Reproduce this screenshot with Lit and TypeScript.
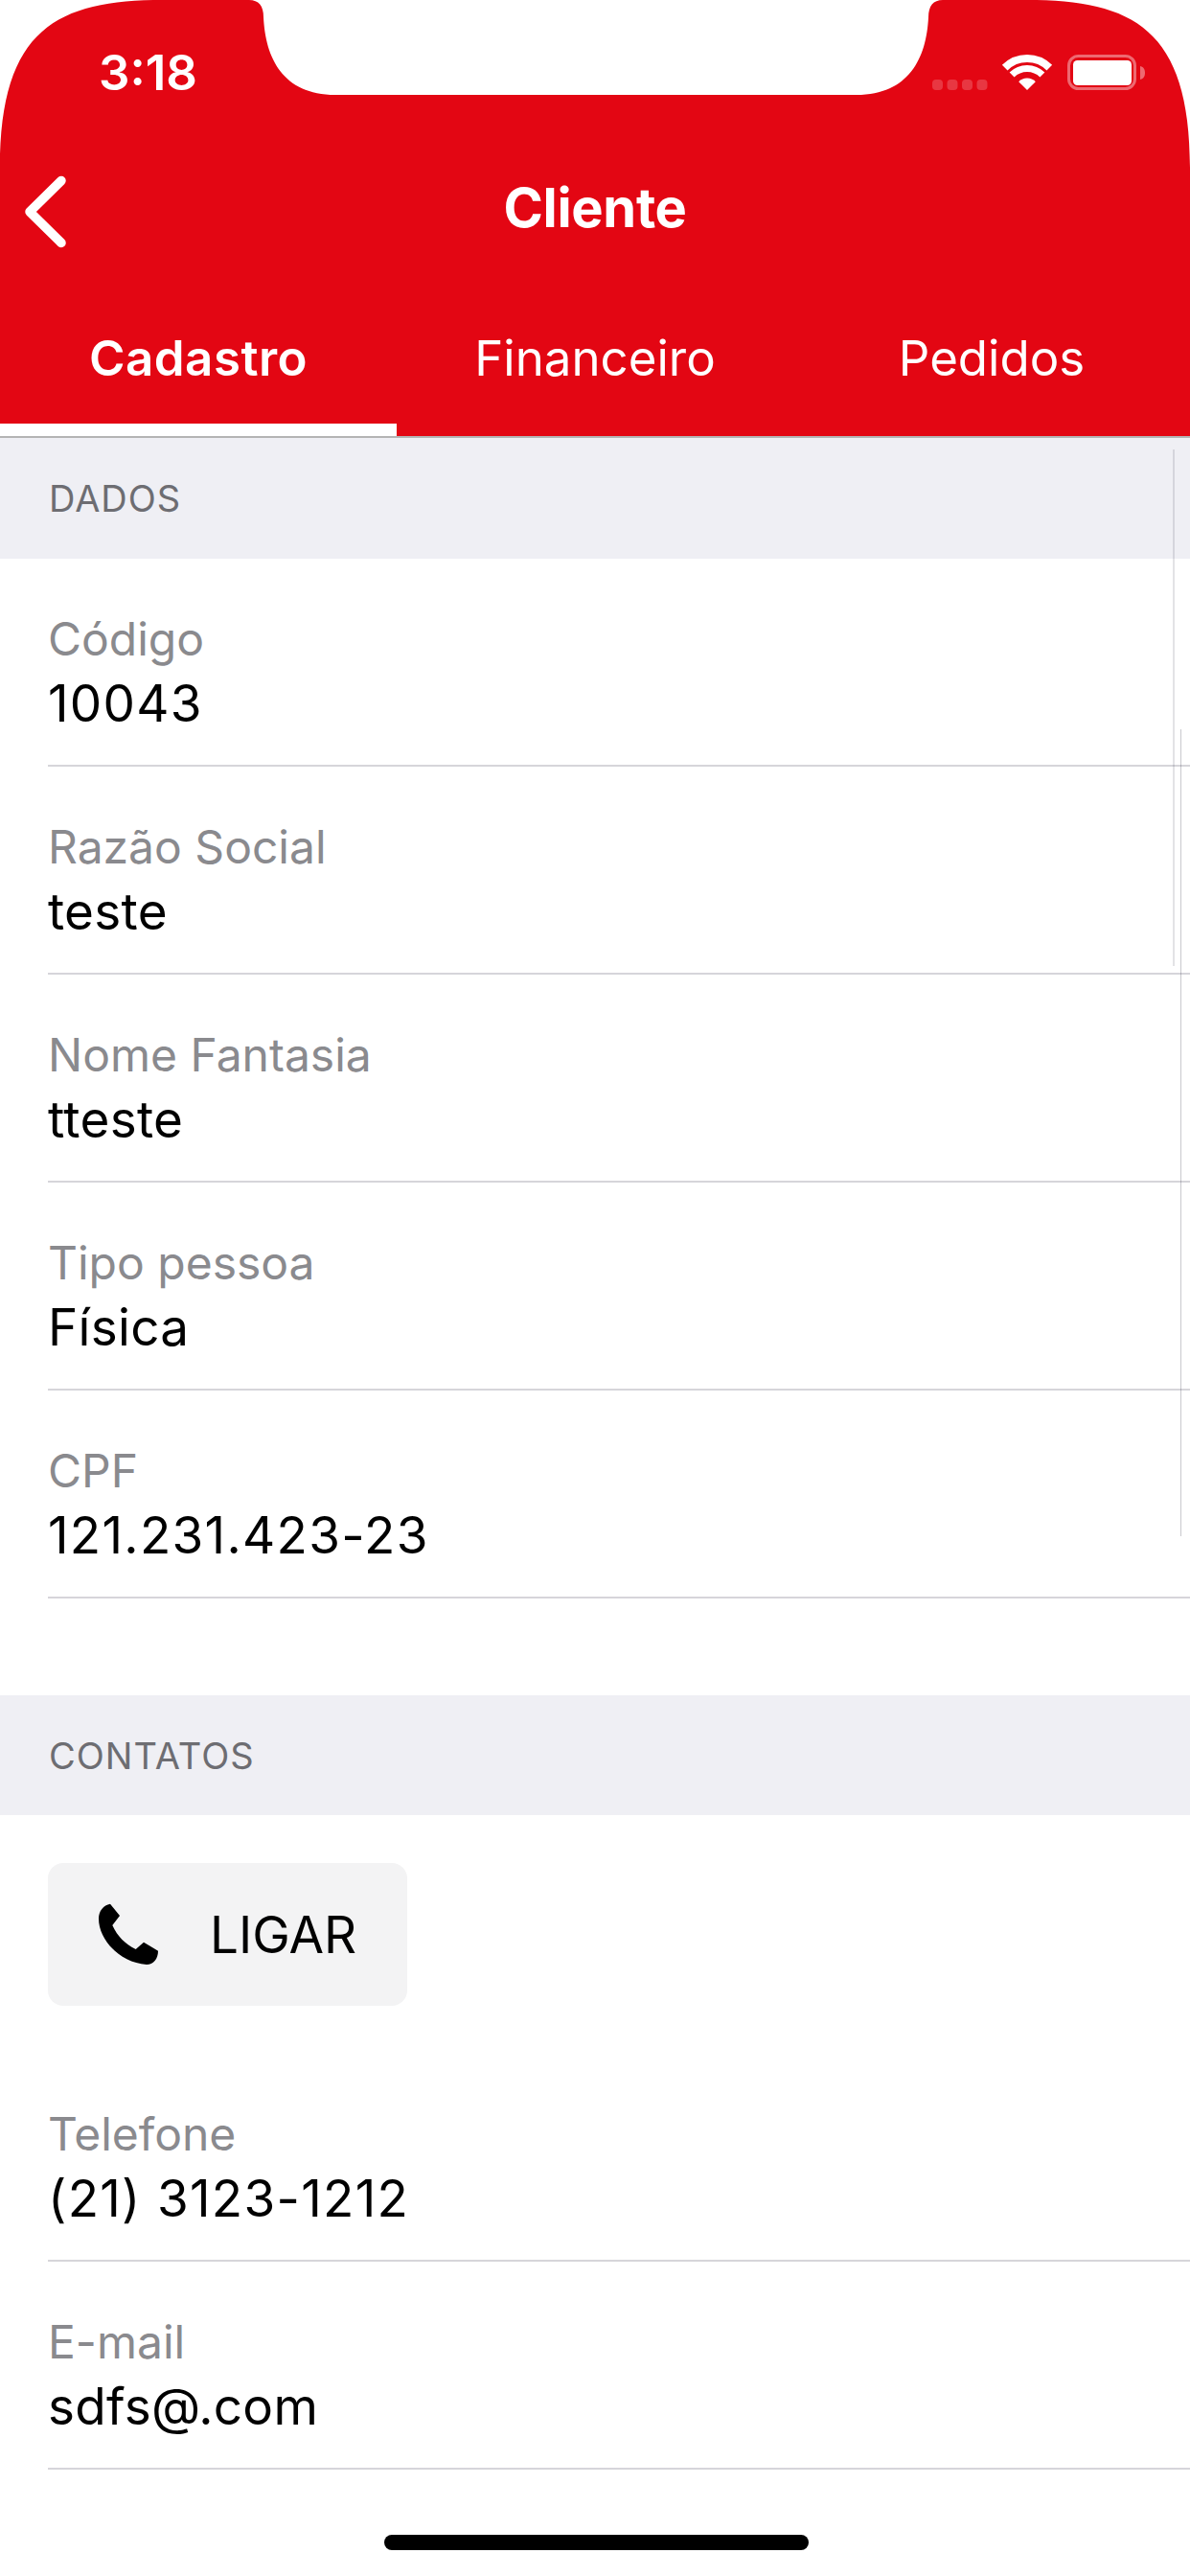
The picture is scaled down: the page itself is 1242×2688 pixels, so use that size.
import { LitElement, html, css } from 'lit'
import { customElement } from 'lit/decorators.js'
import { classMap } from 'lit/directives/class-map.js'

type Row = { label: string; value: string; num?: boolean }

const dados: Row[] = [
  { label: 'Código', value: '10043', num: true },
  { label: 'Razão Social', value: 'teste' },
  { label: 'Nome Fantasia', value: 'tteste' },
  { label: 'Tipo pessoa', value: 'Física' },
  { label: 'CPF', value: '121.231.423-23', num: true },
]

const contatos: Row[] = [
  { label: 'Telefone', value: '(21) 3123-1212', num: true },
  { label: 'E-mail', value: 'sdfs@.com' },
]

@customElement('app-root')
export class AppRoot extends LitElement {
  static styles = css`
    :host {
      display: block;
      position: relative;
      width: 1242px;
      height: 2688px;
      overflow: hidden;
      background: #fff;
      font-family: Inter, 'Liberation Sans', sans-serif;
      color: #000;
    }

    .header {
      background: #e30613;
      color: #fff;
      height: 455px;
      display: flex;
      flex-direction: column;
      border-bottom: 2px solid #b4b4b4;
      box-sizing: content-box;
    }

    .status {
      height: 150px;
      flex: none;
    }

    .nav {
      height: 134px;
      flex: none;
      display: flex;
      align-items: center;
      justify-content: center;
      position: relative;
    }

    .back {
      position: absolute;
      left: 26px;
      top: 33px;
    }

    .title {
      font-size: 56px;
      font-weight: 700;
      letter-spacing: -0.3px;
    }

    .tabs {
      flex: 1;
      display: grid;
      grid-template-columns: repeat(3, 1fr);
    }

    .tab {
      display: flex;
      align-items: flex-end;
      justify-content: center;
      font-size: 51px;
      line-height: 60px;
      font-weight: 400;
      padding-bottom: 38px;
      border-bottom: 13px solid transparent;
    }

    .tab.active {
      font-weight: 600;
      letter-spacing: 0.5px;
      border-bottom-color: #fff;
    }

    .section-head {
      height: 125px;
      background: #efeff4;
      display: flex;
      align-items: center;
      padding-left: 51px;
      font-size: 38px;
      letter-spacing: 1px;
      color: #6d6d72;
    }

    .section-head.first {
      height: 126px;
    }

    .row {
      height: 217px;
      box-sizing: border-box;
      margin-left: 50px;
      padding-top: 52px;
      border-bottom: 2px solid #d6d5da;
    }

    .label {
      font-size: 48px;
      line-height: 64px;
      color: #8a8a8e;
    }

    .value {
      font-size: 53px;
      line-height: 70px;
      letter-spacing: 0.3px;
    }

    .value.num {
      letter-spacing: 1.3px;
    }

    .spacer {
      height: 101px;
    }

    .call {
      margin: 50px 0 50px 50px;
      width: 375px;
      height: 149px;
      border-radius: 16px;
      background: #f3f3f4;
      display: flex;
      align-items: center;
      gap: 53px;
      padding-left: 53px;
      box-sizing: border-box;
      font-size: 53px;
    }

    .chrome {
      position: absolute;
      left: 0;
      top: 0;
    }

    .time {
      position: absolute;
      left: 103px;
      top: 46px;
      font-size: 51px;
      line-height: 60px;
      font-weight: 600;
      color: #fff;
    }

    .scroll-a {
      position: absolute;
      left: 1224px;
      top: 469px;
      width: 2px;
      height: 539px;
      background: rgba(60, 60, 80, 0.14);
    }

    .scroll-b {
      position: absolute;
      left: 1232px;
      top: 761px;
      width: 1px;
      height: 842px;
      background: rgba(60, 60, 80, 0.28);
    }

    .home {
      position: absolute;
      left: 401px;
      top: 2645px;
      width: 443px;
      height: 16px;
      border-radius: 8px;
      background: #000;
    }
  `

  private renderRow(row: Row) {
    return html`
      <div class="row">
        <div class="label">${row.label}</div>
        <div class=${classMap({ value: true, num: !!row.num })}>${row.value}</div>
      </div>
    `
  }

  render() {
    return html`
      <div class="header">
        <div class="status"></div>
        <div class="nav">
          <svg class="back" width="44" height="76" viewBox="0 0 44 76" fill="none">
            <path d="M38 5.5 L5 38 L38 70.500" stroke="#fff" stroke-width="9.500" stroke-linecap="round" stroke-linejoin="round" />
          </svg>
          <span class="title">Cliente</span>
        </div>
        <div class="tabs">
          <div class="tab active">Cadastro</div>
          <div class="tab">Financeiro</div>
          <div class="tab">Pedidos</div>
        </div>
      </div>

      <div class="section-head first">DADOS</div>
      ${dados.map((r) => this.renderRow(r))}
      <div class="spacer"></div>

      <div class="section-head">CONTATOS</div>
      <div class="call">
        <svg width="63" height="65" viewBox="13 12 63 65">
          <path fill="#000" d="M25 12.700 L35 25 L27.300 35 C33 47 40 54 51.700 60 L60 52.700 L75 61.700 C75 70 70 76 63 76 C35 74 13 50 13 28 C13 20 18 14 25 12.700 Z" />
        </svg>
        <span>LIGAR</span>
      </div>
      ${contatos.map((r) => this.renderRow(r))}

      <svg class="chrome" width="1242" height="180" viewBox="0 0 1242 180">
        <path fill="#fff" d="M0 0 H170 C60 0 0 30 0 175 Z" />
        <path fill="#fff" d="M1242 0 H1072 C1182 0 1242 30 1242 175 Z" />
        <path fill="#fff" d="M260 0 C270 0 275 6 275 18 C277 60 295 99 350 99 H894 C949 99 967 60 969 18 C969 6 974 0 984 0 Z" />
        <g fill="#fff" fill-opacity="0.2">
          <rect x="973" y="83" width="11" height="11" rx="4" />
          <rect x="988.500" y="83" width="11" height="11" rx="4" />
          <rect x="1004" y="83" width="11" height="11" rx="4" />
          <rect x="1019.500" y="83" width="11" height="11" rx="4" />
        </g>
        <g transform="translate(1047 57)">
          <path d="M1.700 13.700 A33 33 0 0 1 48.300 13.700" fill="none" stroke="#fff" stroke-width="8" />
          <path d="M9.100 21.100 A22.500 22.500 0 0 1 40.900 21.100" fill="none" stroke="#fff" stroke-width="7" />
          <path d="M25 37 L16.200 28.200 A12.500 12.500 0 0 1 33.800 28.200 Z" fill="#fff" />
        </g>
        <rect x="1115.500" y="58.500" width="69" height="34" rx="10" fill="none" stroke="#fff" stroke-opacity="0.4" stroke-width="3" />
        <rect x="1120" y="63" width="61" height="26" rx="4.500" fill="#fff" />
        <path d="M1190 69 C1194 70 1195 73 1195 76 C1195 79 1194 82 1190 83 Z" fill="#fff" fill-opacity="0.4" />
      </svg>
      <div class="time">3:18</div>

      <div class="scroll-a"></div>
      <div class="scroll-b"></div>
      <div class="home"></div>
    `
  }
}

declare global {
  interface HTMLElementTagNameMap {
    'app-root': AppRoot
  }
}
